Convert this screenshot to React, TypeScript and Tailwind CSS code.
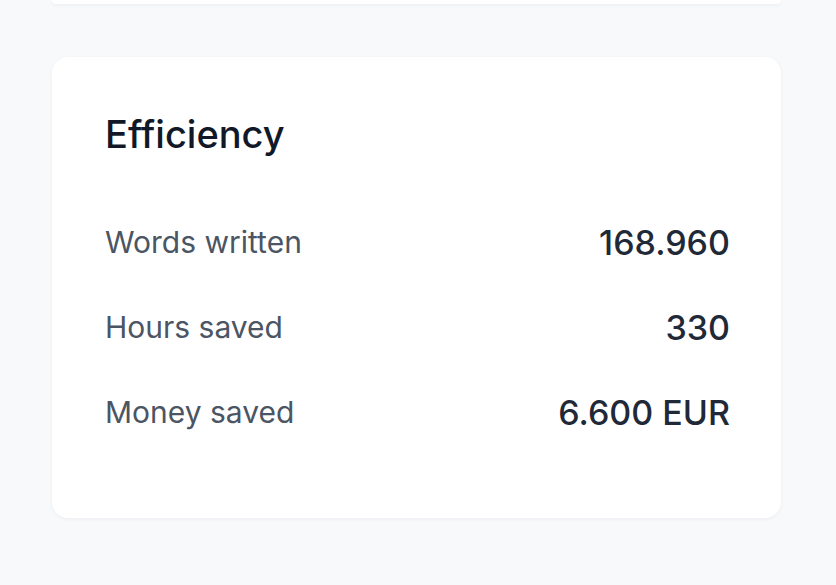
const stats = [
  { label: 'Words written', value: '168.960' },
  { label: 'Hours saved', value: '330' },
  { label: 'Money saved', value: '6.600 EUR' },
];

export default function App() {
  return (
    <div className="min-h-screen w-full bg-[#f8f9fb] font-['Inter',sans-serif]">
      <div className="flex flex-col pb-[67px] pl-[52px] pr-[55px]">
        <div className="h-[4px] rounded-b-2xl bg-white shadow-[0_1px_4px_rgba(15,23,42,0.06)]" />

        <section className="mt-[53px] rounded-2xl bg-white pb-[86px] pl-[53px] pr-[51px] pt-[55px] shadow-[0_1px_4px_rgba(15,23,42,0.05)]">
          <h2 className="text-[38px] font-medium leading-[44px] text-[#111827]">Efficiency</h2>

          <dl className="mt-[66px] flex flex-col gap-[45px]">
            {stats.map((stat) => (
              <div key={stat.label} className="flex h-[40px] items-center justify-between">
                <dt className="text-[30px] text-[#4b5563]">{stat.label}</dt>
                <dd className="text-[34px] font-medium text-[#1f2937]">{stat.value}</dd>
              </div>
            ))}
          </dl>
        </section>
      </div>
    </div>
  );
}
